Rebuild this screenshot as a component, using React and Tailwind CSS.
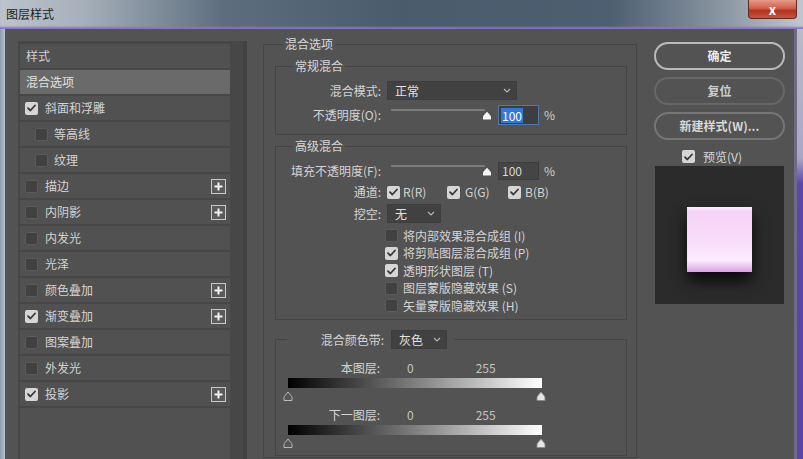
import React from "react";

const styleRows = [
  { label: "斜面和浮雕", on: true },
  { label: "等高线", sub: true },
  { label: "纹理", sub: true },
  { label: "描边", plus: true },
  { label: "内阴影", plus: true },
  { label: "内发光" },
  { label: "光泽" },
  { label: "颜色叠加", plus: true },
  { label: "渐变叠加", on: true, plus: true },
  { label: "图案叠加" },
  { label: "外发光" },
  { label: "投影", on: true, plus: true },
];

const blendChecks = [
  { label: "将内部效果混合成组 (I)", on: false },
  { label: "将剪贴图层混合成组 (P)", on: true },
  { label: "透明形状图层 (T)", on: true },
  { label: "图层蒙版隐藏效果 (S)", on: false },
  { label: "矢量蒙版隐藏效果 (H)", on: false },
];

function Check({ on }) {
  if (on) {
    return (
      <span className="flex h-[13px] w-[13px] shrink-0 items-center justify-center rounded-[2px] bg-[#d6d6d6]">
        <svg width="9" height="8" viewBox="0 0 9 8">
          <path d="M1 4.2 L3.4 6.5 L8 1.5" fill="none" stroke="#383838" strokeWidth="1.8" strokeLinecap="round" strokeLinejoin="round" />
        </svg>
      </span>
    );
  }
  return <span className="block h-[13px] w-[13px] shrink-0 rounded-[2px] border border-[#5a5a5a] bg-[#414141]" />;
}

function Plus() {
  return (
    <span className="flex h-[15px] w-[15px] items-center justify-center border border-[#c9c9c9] bg-[#5b5b5b]">
      <svg width="9" height="9" viewBox="0 0 9 9">
        <path d="M4.5 0.5v8M0.5 4.5h8" stroke="#f2f2f2" strokeWidth="2" />
      </svg>
    </span>
  );
}

function Select({ value, className }) {
  return (
    <div className={"flex h-[19px] items-center justify-between border border-[#3d3d3d] bg-[#414141] pl-[7px] pr-[5px] leading-[17px] text-[#e2e2e2] " + className}>
      <span>{value}</span>
      <svg width="8" height="5" viewBox="0 0 8 5">
        <path d="M1 1l3 3 3-3" fill="none" stroke="#b5b5b5" strokeWidth="1.2" />
      </svg>
    </div>
  );
}

function Thumb({ light }) {
  return (
    <svg width="10" height="10" viewBox="0 0 10 10">
      <path
        d="M1 9.5 V6.8 Q1 5.6 2 4.6 L5 1 L8 4.6 Q9 5.6 9 6.8 V9.5 Z"
        fill={light ? "#e6e6e6" : "#555555"}
        stroke={light ? "#8c8c8c" : "#b8b8b8"}
        strokeWidth="1"
      />
    </svg>
  );
}

function Slider() {
  return (
    <div className="relative ml-[10px] h-[20px] w-[101px]">
      <div className="absolute left-0 top-[4px] h-[2px] w-[94px] bg-[#7c7c7c]" />
      <svg className="absolute left-[91px] top-[6px]" width="10" height="9" viewBox="0 0 10 9">
        <path d="M1 8.5 V6 Q1 5 2 4 L5 0.8 L8 4 Q9 5 9 6 V8.5 Z" fill="#f4f4f4" />
      </svg>
    </div>
  );
}

function Range({ label }) {
  return (
    <>
      <div className="flex h-[16px] items-center leading-[16px]">
        <span className="w-[104px] text-right">{label}</span>
        <span className="ml-[27px] text-[#c4c4c4]">0</span>
        <span className="ml-[62px] text-[#c4c4c4]">255</span>
      </div>
      <div className="ml-[12px] mt-[2px] h-[10px] w-[254px] bg-[linear-gradient(90deg,#000_0%,#fff_100%)]" />
      <div className="ml-[7px] mt-[3px] flex h-[10px] w-[263px] justify-between">
        <Thumb />
        <Thumb light />
      </div>
    </>
  );
}

export default function App() {
  return (
    <div className="flex h-[459px] w-[803px] flex-col overflow-hidden bg-[#a9b4c0] font-['Noto_Sans_CJK_SC',sans-serif] text-[12px] text-[#d3d3d3]">
      {/* Title bar */}
      <div className="flex h-[29px] shrink-0 items-start justify-between bg-[linear-gradient(90deg,#bcc3cb_0%,#a7b1bb_10%,#5d6d7d_28%,#4a5b6c_50%,#4e5f71_76%,#8a96a2_90%,#c0c7ce_100%)] shadow-[inset_0_-3px_2px_-1px_#8576c0]">
        <span className="pl-[6px] pt-[6px] leading-[16px] text-[#1c1c1c]">图层样式</span>
        <div className="mr-[6px] flex h-[19px] w-[49px] items-center justify-center rounded-b-[4px] border border-t-0 border-[#5e2a22] bg-[linear-gradient(180deg,#e69a88_0%,#d0604c_45%,#b3321f_60%,#c8553f_100%)] text-[13px] font-bold leading-none text-white">
          x
        </div>
      </div>

      <div className="flex flex-1">
        <div className="w-[5px] bg-[linear-gradient(90deg,#8c9aaa,#b8c2cc)]" />

        {/* Dialog body */}
        <div className="flex flex-1 items-start bg-[#535353] pl-[13px] pr-[9px]">
          {/* Style list */}
          <div className="mt-[12px] flex w-[229px] self-stretch bg-[#474747]">
            <div className="ml-[2px] flex w-[210px] flex-col gap-[2px] pt-[3px]">
              <div className="flex h-[24px] items-center bg-[#515151] pl-[6px] text-[#cfcfcf]">样式</div>
              <div className="flex h-[24px] items-center bg-[#6a6a6a] pl-[6px] text-[#e2e2e2]">混合选项</div>
              {styleRows.map((row) => (
                <div
                  key={row.label}
                  className={"flex h-[24px] items-center bg-[#515151] pr-[4px] " + (row.sub ? "pl-[15px]" : "pl-[5px]")}
                >
                  <Check on={row.on} />
                  <span className={"flex-1 " + (row.sub ? "ml-[6px]" : "ml-[7px]")}>{row.label}</span>
                  {row.plus && <Plus />}
                </div>
              ))}
              <div className="flex-1 bg-[#515151]" />
            </div>
            <div className="flex-1 border-r-[4px] border-[#424242]" />
          </div>

          {/* Blending options */}
          <fieldset className="ml-[16px] mt-[7px] w-[374px] border border-[#444444] pb-[1px] pl-[11px] pr-[9px]">
            <legend className="ml-[8px] px-[2px] leading-[16px] text-[#d8d8d8]">混合选项</legend>

            <fieldset className="mt-[6px] border border-[#444444] pb-[9px]">
              <legend className="ml-[17px] px-[2px] leading-[16px] text-[#d8d8d8]">常规混合</legend>
              <div className="mt-[7px] flex items-center">
                <span className="w-[105px] text-right leading-[16px]">混合模式:</span>
                <Select value="正常" className="ml-[6px] w-[130px]" />
              </div>
              <div className="mt-[5px] flex h-[20px] items-center">
                <span className="w-[105px] text-right leading-[16px]">不透明度(O):</span>
                <Slider />
                <div className="ml-[6px] flex h-[20px] w-[41px] items-center border border-[#4f79a8] bg-[#3e3e3e] pl-[2px]">
                  <span className="bg-[#2f7ad8] px-[1px] leading-[15px] text-white">100</span>
                </div>
                <span className="ml-[5px] text-[#cfcfcf]">%</span>
              </div>
            </fieldset>

            <fieldset className="mt-[3px] border border-[#444444] pb-[4px]">
              <legend className="ml-[17px] px-[2px] leading-[16px] text-[#d8d8d8]">高级混合</legend>
              <div className="mt-[8px] flex h-[18px] items-center">
                <span className="w-[105px] text-right leading-[16px]">填充不透明度(F):</span>
                <Slider />
                <div className="ml-[6px] flex h-[18px] w-[41px] items-center border border-[#3d3d3d] bg-[#454545] pl-[3px] leading-[16px] text-[#d8d8d8]">
                  100
                </div>
                <span className="ml-[5px] text-[#cfcfcf]">%</span>
              </div>
              <div className="mt-[5px] flex h-[14px] items-center leading-[14px]">
                <span className="w-[105px] text-right">通道:</span>
                <span className="ml-[6px]"><Check on /></span>
                <span className="ml-[3px] w-[44px]">R(R)</span>
                <Check on />
                <span className="ml-[5px] w-[43px]">G(G)</span>
                <Check on />
                <span className="ml-[4px]">B(B)</span>
              </div>
              <div className="mt-[5px] flex items-center">
                <span className="w-[105px] text-right leading-[16px]">挖空:</span>
                <Select value="无" className="ml-[6px] w-[54px]" />
              </div>
              <div className="mt-[4px] flex flex-col pl-[109px]">
                {blendChecks.map((c) => (
                  <div key={c.label} className="flex h-[17.5px] items-center">
                    <Check on={c.on} />
                    <span className="ml-[5px] leading-[16px]">{c.label}</span>
                  </div>
                ))}
              </div>
            </fieldset>

            <fieldset className="mt-[10px] border border-[#444444] pb-[7px]">
              <legend className="ml-[11px]">
                <div className="flex h-[20px] items-center pr-[7px]">
                  <span className="w-[97px] text-right leading-[16px]">混合颜色带:</span>
                  <Select value="灰色" className="ml-[7px] w-[56px]" />
                </div>
              </legend>
              <div className="mt-[10px]">
                <Range label="本图层:" />
              </div>
              <div className="mt-[6px]">
                <Range label="下一图层:" />
              </div>
            </fieldset>
          </fieldset>

          {/* Buttons and preview */}
          <div className="ml-[17px] flex w-[131px] flex-col pt-[13px]">
            <button className="h-[28px] w-full rounded-full border-2 border-[#bababa] font-bold text-[#ededed]">确定</button>
            <button className="mt-[7px] h-[28px] w-full rounded-full border-2 border-[#676767] font-bold text-[#cdcdcd]">复位</button>
            <button className="mt-[7px] h-[28px] w-full rounded-full border-2 border-[#767676] font-bold text-[#d8d8d8]">新建样式(W)...</button>
            <div className="mt-[10px] flex h-[13px] items-center pl-[28px]">
              <Check on />
              <span className="ml-[8px] leading-[14px] text-[#d8d8d8]">预览(V)</span>
            </div>
            <div className="ml-[1px] mt-[3px] flex h-[138px] w-[129px] justify-center bg-[#2b2b2b] pt-[41px]">
              <div className="h-[65px] w-[65px] bg-[linear-gradient(180deg,#fdeefd_0%,#f6d2f8_7%,#f9dbfa_50%,#fcebfd_82%,#e8bdee_93%,#d6a3e0_100%)] shadow-[0_9px_14px_rgba(0,0,0,0.8)]" />
            </div>
          </div>
        </div>

        <div className="w-[3px] bg-[#6f6a86]" />
        <div className="w-[6px] bg-[linear-gradient(180deg,#b8bbc9_0%,#aaa6c6_30%,#5b47a8_36%,#5a45a6_100%)]" />
      </div>
    </div>
  );
}
